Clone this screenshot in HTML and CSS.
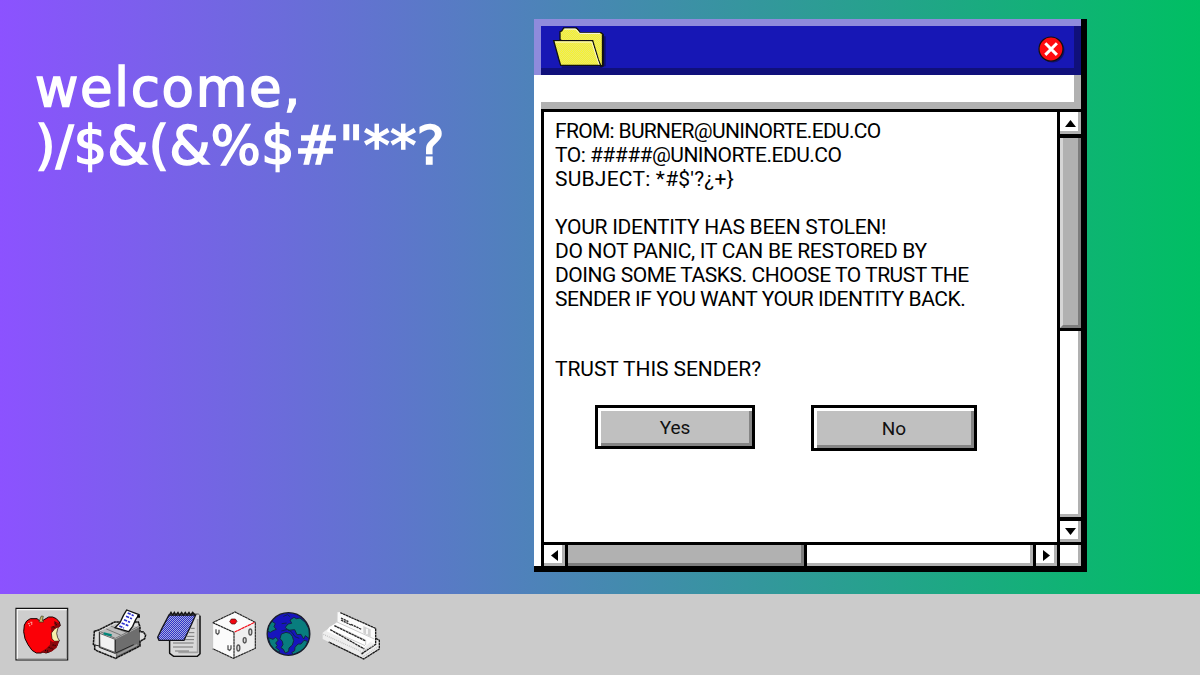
FILE: index.html
```html
<!DOCTYPE html>
<html lang="en">
<head>
<meta charset="utf-8">
<title>Welcome</title>
<link rel="stylesheet" href="styles.css">
</head>
<body>
<main class="desktop">
  <h1 class="welcome"><span class="w1">welcome,</span><span class="w2">)/$&amp;(&amp;%$#"**?</span></h1>
  <section class="window">
    <header class="titlebar">
      <svg class="folder" width="55" height="42" viewBox="81 45 165 126">
        <path d="M236 76h6v90h-4l-8 5H110v-5h122z" fill="#10106e"/>
        <path d="M105 86V62l5-2 6-9h38l6 6 5 8h63l6 5v92l-6 3z" fill="url(#yl)" stroke="#111" stroke-width="4"/>
        <path d="M118 54h34l12 13h61" fill="none" stroke="#fff" stroke-width="3"/>
        <path d="M86 89H203l5 17 6 20 6 20 7 17H107l-6-20-6-22z" fill="url(#yl)" stroke="#111" stroke-width="4"/>
        <path d="M90 93H200l22 68" fill="none" stroke="#fffbd0" stroke-width="3"/>
        <path d="M233 70v95h-8" fill="none" stroke="#111" stroke-width="5"/>
        <defs><pattern id="yl" width="6" height="6" patternUnits="userSpaceOnUse"><path d="M0 0h6v6H0z" fill="#f8f52a"/><path d="M0 0h3v3H0zM3 3h3v3H3z" fill="#e9e670"/></pattern></defs>
      </svg>
      <svg class="close" width="27" height="27" viewBox="0 0 27 27">
        <circle cx="14.5" cy="14.5" r="12" fill="#10106e"/>
        <circle cx="13" cy="13" r="12" fill="#ff0a10" stroke="#111" stroke-width="1.2"/>
        <path d="M7.3 7.3l11.6 11.6M18.9 7.3L7.3 18.9" stroke="#fff" stroke-width="3"/>
      </svg>
    </header>
    <div class="toolbar"></div>
    <div class="frame">
      <article class="mail">
        <p><span class="l1">FROM: BURNER@UNINORTE.EDU.CO</span><span class="l2">TO: #####@UNINORTE.EDU.CO</span><span class="l3">SUBJECT: *#$'?¿+}</span></p>
        <p><span class="l4">YOUR IDENTITY HAS BEEN STOLEN!</span><span class="l5">DO NOT PANIC, IT CAN BE RESTORED BY</span><span class="l6">DOING SOME TASKS. CHOOSE TO TRUST THE</span><span class="l7">SENDER IF YOU WANT YOUR IDENTITY BACK.</span></p>
        <p class="question"><span class="l8">TRUST THIS SENDER?</span></p>
        <div class="actions"><button class="btn yes">Yes</button><button class="btn no">No</button></div>
      </article>
      <div class="vbar">
        <div class="cell"><svg width="11" height="7" viewBox="0 0 11 7"><path d="M5.5 0L11 7H0z"/></svg></div>
        <div class="cell thumb"></div>
        <div class="cell"></div>
        <div class="cell"><svg width="11" height="7" viewBox="0 0 11 7"><path d="M5.5 7L11 0H0z"/></svg></div>
      </div>
      <div class="hbar">
        <div class="cell"><svg width="7" height="11" viewBox="0 0 7 11"><path d="M0 5.5L7 0V11z"/></svg></div>
        <div class="cell thumb"></div>
        <div class="cell"></div>
        <div class="cell"><svg width="7" height="11" viewBox="0 0 7 11"><path d="M7 5.5L0 0V11z"/></svg></div>
      </div>
      <div class="cell"></div>
    </div>
  </section>
</main>
<footer class="taskbar">
  <svg class="apple" width="54" height="57" viewBox="45 45 162 171">
    <path d="M48 55H203V210H48z" fill="#cecece" stroke="#111" stroke-width="3.5"/>
    <path d="M52 207V59H200" fill="none" stroke="#f6f6f6" stroke-width="4"/>
    <path d="M200 61V206H53" fill="none" stroke="#a5a5a5" stroke-width="3"/>
    <path d="M122 95l-11-9H91l-11 7-7 12-2 20 4 21 9 18 12 17 13 8h14l6-3 9 3 10-3 14-9 9-10 5-15-10-4-7-9-1-14 8-10 10-6 5-2-3-11-9-10-11-5h-12z" fill="#fb0007" stroke="#190000" stroke-width="3"/>
    <path d="M178 107l-14 9-10 13 2 18 8 7 15-1-6-10-3-13 3-13z" fill="#f7efac" stroke="#1b0505" stroke-width="2"/>
    <path d="M162 92l15 8 3 10-17 7-8 11-3-18 12-3zM150 151l9 5 18-2-7 19-16 12-20 3-14-1 18-11 12-12z" fill="#8d080c"/>
    <path d="M165 98l5 9M158 110l7 3M146 172l13 5M135 181l12 3M158 165l11 2" stroke="#210000" stroke-width="4" stroke-dasharray="3 3"/>
    <path d="M117 96h14l-4-6 3-11-6-1-4 9z" fill="#c8bd72" stroke="#333315" stroke-width="2"/>
    <path d="M84 101h5M91 97h6M87 107h4M93 102h4" stroke="#ff9a91" stroke-width="4"/>
  </svg>
  <svg class="printer" width="56" height="57" viewBox="276 45 168 171">
    <path d="M285 124l12-5 42-20 75 3 6 22 15 5 2 10-9 9-8 1v20l-69 37-63-27z" fill="#dedede"/>
    <path d="M295 126l53-25 72 10-74 37z" fill="#bcbcbc"/>
    <path d="M346 148l74-38v58l-72 36z" fill="#6e6e6e"/>
    <path d="M352 194l60-30" stroke="#999" stroke-width="5"/>
    <path d="M299 130l46 18v39l-45-17z" fill="#f2f2f2" stroke="#666" stroke-width="3"/>
    <path d="M301 125l45 20 70-36M319 117l43 18M332 108l47 19" stroke="#777" stroke-width="3" fill="none"/>
    <path d="M311 130l24 6" stroke="#008579" stroke-width="7"/>
    <path d="M283 124l13-4 48-24h71l5 15v14l10 1 7 9-3 11-10 6-4 2v14l-73 37-57-23-6-4v-13l-4-2z" fill="none" stroke="#111" stroke-width="4.5" stroke-dasharray="8 1"/>
    <path d="M298 125v47l47 18 56-26M284 165l15 3M346 149v39" fill="none" stroke="#222" stroke-width="3"/>
    <path d="M345 113l15-15 10-21 10-17 37 14-10 15-9 20-12 16z" fill="#fff" stroke="#111" stroke-width="4"/>
    <path d="M383 69l18 8M378 79l18 7M372 89l18 8M365 99l20 8M358 108l14 6" stroke="#2c31d0" stroke-width="5" stroke-dasharray="10 3"/>
    <path d="M411 76h9v7h-8z"/>
  </svg>
  <svg class="notepad" width="46" height="57" viewBox="468 45 138 171">
    <path d="M577 72h18l5 5v116l-8 6h-72l-12-10v-38z" fill="#d9d9d9" stroke="#555" stroke-width="3"/>
    <path d="M600 77v114l-8 8h-71l-12-9v-39" fill="none" stroke="#111" stroke-width="4"/>
    <path d="M593 87v100h-58" fill="none" stroke="#a2a2a2" stroke-width="5"/>
    <path d="M572 115h12M567 128h16M561 139h22M551 149h31M519 159h62M519 171h60M525 183h42" stroke="#777" stroke-width="3"/>
    <path d="M507 75h80l-12 27-14 30-9 19h-75l-4-9 14-29z" fill="url(#blue)" stroke="#15151d" stroke-width="4"/>
    <path d="M508 75l5-8 5 8 5-8 5 8 6-8 5 8 6-8 5 8 6-8 5 8 6-8 5 8 6-8 7 8" fill="none" stroke="#151515" stroke-width="4"/>
    <defs><pattern id="blue" width="6" height="6" patternUnits="userSpaceOnUse"><path d="M0 0h6v6H0z" fill="#2c30c9"/><path d="M0 0h3v3H0zM3 3h3v3H3z" fill="#a7addf"/></pattern></defs>
  </svg>
  <svg class="dice" width="46" height="57" viewBox="33 45 138 171">
    <path d="M38 98l67-32 61 31v78l-66 30-62-29z" fill="#fbfbfb"/>
    <path d="M102 127l64-29v77l-64 29z" fill="#efefef"/>
    <path d="M38 98l67-32 61 31v78l-66 30-62-29M38 98l64 29M102 127v77" fill="none" stroke="#242424" stroke-width="3.5" stroke-dasharray="8 1"/>
    <path d="M38 100v75" stroke="#bbb" stroke-width="2"/>
    <path d="M104 126l60-29" stroke="#f20b16" stroke-width="3.5" stroke-dasharray="10 1"/>
    <path d="M94 87h12l5 7-6 8H95l-6-7z" fill="#f10610" stroke="#450c0c" stroke-width="2"/>
    <g fill="#ddd" stroke="#555" stroke-width="4"><path d="M48 118v11l5 4 4-5v-9M84 166v12l5 3 4-5v-10" fill="none"/><ellipse cx="151" cy="126" rx="4.5" ry="9"/><ellipse cx="134" cy="151" rx="4.5" ry="8"/><ellipse cx="115" cy="174" rx="4.5" ry="9"/></g>
  </svg>
  <svg class="globe" width="45" height="57" viewBox="198 45 135 171">
    <circle cx="265.5" cy="132" r="64" fill="#1714bd"/>
    <g fill="#087d7e" stroke="#102b42" stroke-width="3">
      <path d="M270 90l12-8 7 4 11-2 16 13 11 20 1 29-12-9-5 10-8-14-12 1-7-15-20 2-8-9 8-10 11-2z"/>
      <path d="M216 94l10 7-4 9 7 8-10 4-8 5-8-3 4-18z"/>
      <path d="M205 143l14 5 8-6 8 8-8 9 5 8-5 5 11 9v6l-15-9-12-14z"/>
      <path d="M244 132l14-5 12 3 7 9 4 13-4 13-10 9-1 10-10 5-6-11-7-5 6-9-2-10-7-8z"/>
      <path d="M294 162h9l9-11 11 3-7 17-15 13-20 9-6-5 9-6 1-10z"/>
    </g>
    <path d="M244 123l19-5 13 9 9 13 13 5M250 79l13-5 7 6M245 101l15-2" stroke="#0b2452" stroke-width="3" fill="none"/>
    <circle cx="265.5" cy="132" r="64" fill="none" stroke="#1a1f2b" stroke-width="4"/>
  </svg>
  <svg class="card" width="60" height="57" viewBox="363 45 180 171">
    <path d="M368 128l43-32 1-29 10-1 105 46 1 33 10 6v25l-45 31-125-60z" fill="#eee"/>
    <path d="M411 99l1-31 9-1 103 46v50z" fill="#fafafa"/>
    <path d="M388 111l29-16 107 50-34 29-110-50z" fill="#fff"/>
    <path d="M370 133l110 50 10 17 44-30" fill="none" stroke="#c1c1c1" stroke-width="4" stroke-dasharray="3 3"/>
    <path d="M421 68l106 47v48l-43 29M528 145l10 6v26l-47 30-105-51" fill="none" stroke="#191919" stroke-width="4" stroke-dasharray="8 1"/>
    <path d="M405 106l92 44v15M390 119l105 48M411 68v28l112 51M487 184l35-19" fill="none" stroke="#ccc" stroke-width="3"/>
    <path d="M403 107l94 46M391 119l102 58" fill="none" stroke="#292929" stroke-width="4" stroke-dasharray="8 1.5"/>
    <path d="M423 84l22 11M423 90l30 15M453 103l31 15" fill="none" stroke="#292929" stroke-width="4" stroke-dasharray="7 2"/>
    <path d="M490 108l22 10v23l-22-11z" fill="#d1d1d1"/><path d="M501 116v17" stroke="#fff" stroke-width="5"/>
  </svg>
</footer>
</body>
</html>
```

FILE: styles.css
```css
* { box-sizing: border-box; }
body { margin: 0; width: 1200px; height: 675px; overflow: hidden; display: flex; flex-direction: column; font-family: Roboto, sans-serif; }
svg { display: block; flex: none; }
.desktop { height: 594px; display: flex; justify-content: space-between; padding: 19px 113px 0 35px; background: linear-gradient(90deg, #8c52ff, #00bf63); }
.welcome { margin: 40px 0 0; font: 53px/58px "DejaVu Sans", sans-serif; color: #fff; -webkit-text-stroke: 1.5px #fff; }
.welcome span, .mail span { display: block; white-space: pre; width: max-content; }
.w1 { letter-spacing: 1.7px; }
.w2 { letter-spacing: 0; }

.window { width: 553px; height: 553px; display: flex; flex-direction: column; background: #fff; border-right: 6px solid #000; border-bottom: 6px solid #000; }
.titlebar { height: 56px; display: flex; justify-content: space-between; align-items: flex-start; padding: 7px 16px 0 18px; background: #1717b5; box-shadow: inset 7px 7px #8f8bdc, inset -7px -7px #10107b; }
.close { margin-top: 10px; }
.toolbar { height: 34px; margin-left: 7px; border-right: 7px solid #b1b1b1; border-bottom: 7px solid #b1b1b1; }
.frame { flex: 1; margin-left: 7px; padding: 3px 0 0 3px; background: #000; display: grid; grid-template-columns: 513px 21px; grid-template-rows: 430px 21px; gap: 3px; }
.mail { background: #fff; padding: 7px 0 0 11px; font-size: 21px; line-height: 24px; color: #000; }
.mail p { margin: 0 0 24px; }
.mail .question { margin: 46px 0 0; }
.actions { display: flex; align-items: flex-start; gap: 56px; margin: 24px 0 0 40px; }
.btn { padding: 0; background: #c0c0c0; font: 19px Roboto, sans-serif; color: #111; border: 3px solid #000; box-shadow: inset 3px 3px #fff, inset -3px -3px #858585; }
.yes { width: 160px; height: 44px; }
.no { width: 166px; height: 46px; }
.vbar { display: grid; grid-template-rows: 22px 190px 186px 21px; row-gap: 3.67px; }
.hbar { display: grid; grid-template-columns: 21px 236px 226px 21px; column-gap: 3px; }
.cell { display: flex; align-items: center; justify-content: center; padding: 3px 0 0 3px; background: #fff; border-right: 3px solid #b1b1b1; border-bottom: 3px solid #b1b1b1; }
.thumb { background: #b1b1b1; border-color: #7d7d7d; }
.vbar .thumb { border-left: 3px solid #d5d5d5; }

.l1 { letter-spacing: -0.69px; }
.l2 { letter-spacing: -0.52px; }
.l3 { letter-spacing: 0.22px; }
.l4 { letter-spacing: -0.28px; }
.l5 { letter-spacing: -0.31px; }
.l6 { letter-spacing: -0.46px; }
.l7 { letter-spacing: -0.45px; }
.l8 { letter-spacing: -0.07px; }

.taskbar { height: 81px; display: flex; padding: 11px 0 0 15px; background: #cbcbcb; }
.printer { margin-left: 23px; }
.notepad { margin-left: 8px; }
.dice, .globe { margin-left: 9px; }
.card { margin-left: 10px; }
```
